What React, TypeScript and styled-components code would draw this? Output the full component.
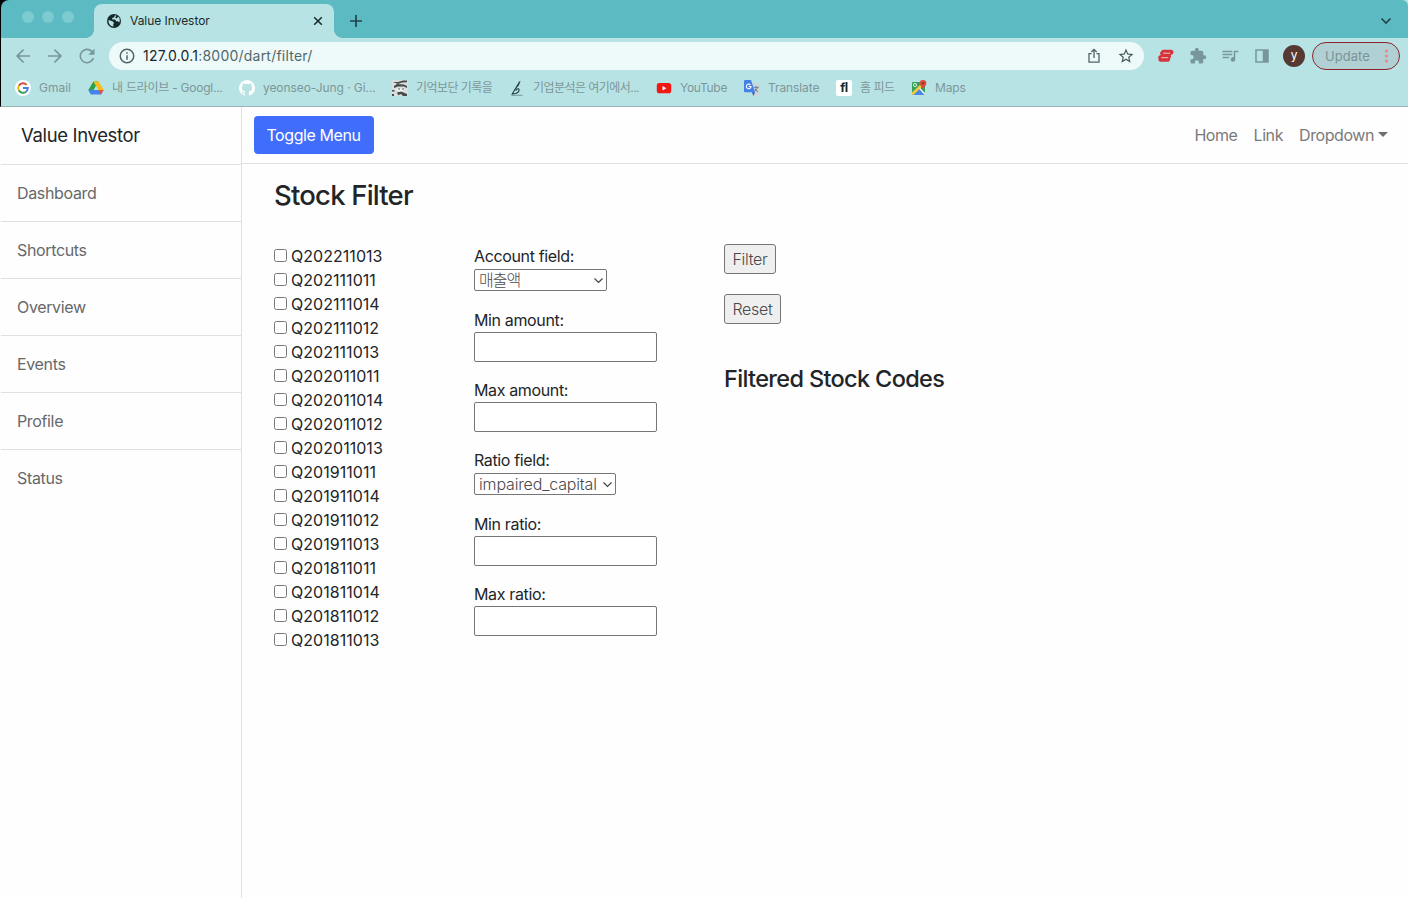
import React from 'react';
import styled, { createGlobalStyle } from 'styled-components';

const GlobalStyle = createGlobalStyle`
  *, *::before, *::after { box-sizing: border-box; }
  body {
    margin: 0;
    background: #fefefe;
    color: #222528;
    font-family: Inter, "Noto Sans CJK KR", sans-serif;
    font-size: 16px;
    line-height: 24px;
    overflow: hidden;
  }
  button, input, select { font: inherit; margin: 0; }
`;

const Window = styled.div`
  height: 898px;
  display: flex;
  flex-direction: column;
  overflow: hidden;
`;

const Chrome = styled.header`
  flex: none;
  height: 107px;
  background: #b8e3e4;
  border-left: 1px solid #000;
  border-bottom: 1px solid #9ab3b9;
`;

const TabStrip = styled.div`
  height: 38px;
  display: flex;
  align-items: flex-end;
  background: #5bbac2;
  border-top-left-radius: 8px;
  border-top-right-radius: 6px;
  box-shadow: -6px -6px 0 #000;
`;

const Lights = styled.div`
  display: flex;
  gap: 8px;
  width: 93px;
  padding: 0 0 15px 21px;
`;

const Light = styled.i`
  width: 12px;
  height: 12px;
  border-radius: 50%;
  background: #7bcbd0;
`;

const Tab = styled.div`
  position: relative;
  width: 240px;
  height: 34px;
  display: flex;
  align-items: center;
  padding: 0 10px 0 13px;
  border-radius: 8px 8px 0 0;
  background: #b8e3e4;
  color: #1a2b2d;
  font-size: 12px;
  letter-spacing: -0.03px;

  &::before, &::after {
    content: '';
    position: absolute;
    bottom: 0;
    width: 8px;
    height: 8px;
  }
  &::before { left: -8px; background: radial-gradient(circle at 0 0, transparent 7.5px, #b8e3e4 8px); }
  &::after { right: -8px; background: radial-gradient(circle at 100% 0, transparent 7.5px, #b8e3e4 8px); }
`;

const TabTitle = styled.span`
  flex: 1;
  margin-left: 9px;
`;

const NewTab = styled.div`
  display: flex;
  padding: 0 0 10px 15px;
  flex: 1;
`;

const TabSearch = styled.div`
  display: flex;
  padding: 0 16px 12px 0;
`;

const Toolbar = styled.div`
  height: 36px;
  display: flex;
  align-items: center;
`;

const NavIcons = styled.div`
  width: 108px;
  padding-left: 12px;
  display: flex;
  gap: 12px;
`;

const AddressBar = styled.div`
  width: 1035px;
  height: 28px;
  display: flex;
  align-items: center;
  padding: 0 9px;
  border-radius: 14px;
  background: #eef9f9;
`;

const Url = styled.span`
  flex: 1;
  margin-left: 7px;
  font-size: 14px;
  letter-spacing: 0.22px;
  color: #52686b;
  b { font-weight: 400; color: #15282b; }
`;

const AddressActions = styled.div`
  display: flex;
  gap: 14px;
`;

const Extensions = styled.div`
  display: flex;
  align-items: center;
  gap: 14px;
  margin-left: 13px;
`;

const Avatar = styled.div`
  width: 22px;
  height: 22px;
  margin-left: 12px;
  border-radius: 50%;
  background: #553932;
  color: #fff;
  font-size: 12px;
  line-height: 20px;
  text-align: center;
`;

const Update = styled.button`
  width: 88px;
  height: 28px;
  margin-left: 7px;
  padding: 0 10px 0 12px;
  display: flex;
  align-items: center;
  justify-content: space-between;
  border: 1px solid #8e2229;
  border-radius: 14px;
  background: #b0d0d3;
  color: #7b9497;
  font-size: 13px;
  letter-spacing: 0.05px;
`;

const Bookmarks = styled.div`
  height: 28px;
  display: flex;
  align-items: center;
  padding-left: 14px;
`;

const Bookmark = styled.div<{ $w: number; $ls?: number }>`
  width: ${p => p.$w}px;
  display: flex;
  align-items: center;
  gap: 8px;
  white-space: nowrap;
  color: #7c9799;
  font-size: 12px;
  line-height: 16px;
  letter-spacing: ${p => p.$ls ?? 0}px;
  svg { flex: none; }
`;

const Page = styled.div`
  flex: 1;
  display: flex;
  padding-left: 1px;
`;

const Sidebar = styled.aside`
  width: 241px;
  border-right: 1px solid #dfe0e1;
`;

const Brand = styled.div`
  height: 58px;
  padding: 14px 20px;
  border-bottom: 1px solid #dfe0e1;
  font-size: 18.5px;
  line-height: 28px;
  letter-spacing: -0.35px;
`;

const SideLink = styled.a`
  display: block;
  height: 57px;
  padding: 16px;
  color: #676869;
  letter-spacing: -0.35px;
  &:not(:last-child) { border-bottom: 1px solid #dfe0e1; }
`;

const Main = styled.main`
  flex: 1;
`;

const Navbar = styled.nav`
  height: 57px;
  display: flex;
  align-items: center;
  justify-content: space-between;
  padding: 0 20px 0 12px;
  border-bottom: 1px solid #dfe0e1;
`;

const ToggleButton = styled.button`
  width: 120px;
  height: 38px;
  padding: 0 1px 0 0;
  border: 0;
  border-radius: 4px;
  background: #416dfc;
  color: #fff;
  letter-spacing: -0.42px;
  white-space: nowrap;
`;

const NavLinks = styled.div`
  display: flex;
  gap: 16px;
  color: #7a7a7a;
  letter-spacing: -0.42px;
`;

const Caret = styled.i`
  display: inline-block;
  margin-left: 4px;
  vertical-align: 4px;
  border: 5px solid transparent;
  border-top-color: #6f6f6f;
  border-bottom: 0;
`;

const Content = styled.div`
  padding: 14px 32px;
`;

const Title = styled.h1`
  margin: 0 0 32px;
  font-size: 27.5px;
  line-height: 34px;
  font-weight: 500;
  letter-spacing: -0.8px;
`;

const Columns = styled.div`
  display: grid;
  grid-template-columns: 200px 250px 1fr;
`;

const Check = styled.label`
  display: flex;
  align-items: center;
  height: 24px;
  letter-spacing: 0.04px;
`;

const Box = styled.input`
  appearance: none;
  width: 13px;
  height: 13px;
  margin: 0 4px 1px 0;
  border: 1px solid #767676;
  border-radius: 2.5px;
  background: #fff;
`;

const Field = styled.div`
  display: flex;
  flex-direction: column;
  align-items: flex-start;
  margin-bottom: 16px;
  letter-spacing: -0.36px;
`;

const TextInput = styled.input`
  width: 183px;
  height: 30px;
  border: 1px solid #767676;
  border-radius: 2px;
  background: #fff;
`;

const SelectWrap = styled.div<{ $w: number }>`
  position: relative;
  width: ${p => p.$w}px;
  height: 22px;
  margin: 1px 0;
  svg { position: absolute; right: 3px; top: 7px; pointer-events: none; }
`;

const Select = styled.select<{ $ls: number }>`
  appearance: none;
  display: block;
  width: 100%;
  height: 22px;
  padding: 0 0 0 4px;
  border: 1px solid #767676;
  border-radius: 2px;
  background: #fff;
  color: #4a4a4a;
  font-weight: 300;
  line-height: 20px;
  letter-spacing: ${p => p.$ls}px;
`;

const ActionButton = styled.button<{ $w: number }>`
  display: block;
  width: ${p => p.$w}px;
  height: 30px;
  margin-bottom: 20px;
  padding: 0;
  border: 1px solid #767676;
  border-radius: 3px;
  background: #efefef;
  color: #4a4a4a;
  font-weight: 300;
  letter-spacing: -0.3px;
`;

const Subtitle = styled.h2`
  margin: 41px 0 0;
  font-size: 23.5px;
  line-height: 28px;
  font-weight: 500;
  letter-spacing: -0.66px;
`;

const S = ({ children, c = '#78979a', w = 18 }: { children: React.ReactNode; c?: string; w?: number }) => (
  <svg width={w} height={w} viewBox="0 0 24 24" fill={c}>{children}</svg>
);

const Fav = ({ children }: { children: React.ReactNode }) => (
  <svg width="16" height="16" viewBox="0 0 16 16">{children}</svg>
);

const GoogleIcon = () => (
  <Fav>
    <circle cx="8" cy="8" r="8" fill="#fff" />
    <g fill="none" strokeWidth="2">
      <path d="M11.6 4.8A4.8 4.8 0 0 0 3.8 5.7" stroke="#d9483d" />
      <path d="M3.8 5.7A4.8 4.8 0 0 0 3.8 10.3" stroke="#f0b90c" />
      <path d="M3.8 10.3A4.8 4.8 0 0 0 11.1 11.7" stroke="#36a256" />
      <path d="M11.1 11.7A4.8 4.8 0 0 0 12.8 8H8" stroke="#4c80e8" />
    </g>
  </Fav>
);

const DriveIcon = () => (
  <Fav>
    <path d="M5.3 1.5h5.3L5.5 10.2 3 14.4.4 9.9z" fill="#2ba24c" />
    <path d="M5.3 1.5h5.3l5 8.5h-5.2z" fill="#f9bd16" />
    <path d="M.4 10h15.2L13 14.5H3z" fill="#4683ee" />
    <path d="M8 6.2 5.8 10h4.4z" fill="#b8e3e4" />
    <path d="M13 14.5 10.3 10h5.3z" fill="#e5533f" />
  </Fav>
);

const GithubIcon = () => (
  <Fav>
    <path fill="#fff" d="M8 0a8 8 0 0 0-2.5 15.6c.4 0 .5-.2.5-.4v-1.5c-2 .4-2.6-.5-2.8-1-.1-.2-.5-.9-.8-1.1-.3-.1-.7-.5 0-.5.6 0 1.1.6 1.2.8.7 1.2 1.9.9 2.4.7.1-.5.3-.9.5-1.1-1.8-.2-3.6-.9-3.6-4 0-.8.3-1.6.8-2.1-.1-.2-.4-1 .1-2.1 0 0 .7-.2 2.2.8a7.4 7.4 0 0 1 4 0c1.5-1 2.2-.8 2.2-.8.4 1.1.2 1.9.1 2.1.5.6.8 1.3.8 2.1 0 3.1-1.9 3.8-3.6 4 .3.2.5.7.5 1.5v2.2c0 .2.1.5.5.4A8 8 0 0 0 8 0z" />
  </Fav>
);

const SketchIcon = () => (
  <Fav>
    <path d="M0 0h16v16H0z" fill="#d8e0df" />
    <path d="M1 2h5l5-1.5h4v1.7l-5 .2-4 1.6zM2 6l3-2 7 .5 3 1.5v2l-3-1.500H6L2 8zM0 10h2l1 1.500H0zM5 12.500l4-1 6 2.500v2h-4l-2-2-3 1.200zM0 14h2v2H0z" fill="#454a4a" />
    <path d="M5 8.500h7v1.700l-4 1.300-4-1.500z" fill="#fafafa" />
    <path d="M6 9h2M10 9h2" stroke="#555" />
  </Fav>
);

const QuillIcon = () => (
  <Fav>
    <path d="M10.8 1.5 5.3 10.5 3.3 14l3.4-.5C9 12.8 11 10.5 9.8 9 9 8.2 7.4 9.3 6.8 10.5" fill="none" stroke="#263c40" strokeWidth="1.1" />
    <path d="M11.8.5 9.8 5.500 6 9.700z" fill="#263c40" />
    <path d="M2.500 15.300h11" stroke="#5a777a" strokeWidth=".7" />
  </Fav>
);

const YoutubeIcon = () => (
  <Fav>
    <rect x=".8" y="3" width="14.4" height="10.3" rx="2.6" fill="#f01810" />
    <path d="M6.5 5.9v4.5l3.9-2.250z" fill="#fff" />
  </Fav>
);

const TranslateIcon = () => (
  <Fav>
    <path d="M6 3.500h8.500a1.200 1.200 0 0 1 1.200 1.200v10.100a1.200 1.200 0 0 1-1.200 1.200H9.500z" fill="#ccd5d9" />
    <path d="M9.700 7.300h5M12.100 6.200v1.100M13.500 7.300c-.4 2-2 3.700-3.300 4.500M10.800 8.600c.7 1.500 2 2.600 3.200 3.300" stroke="#687f89" fill="none" />
    <path d="M1.200 0H7l4 12.200H1.200A1.200 1.200 0 0 1 0 11V1.200A1.200 1.200 0 0 1 1.200 0z" fill="#4582e8" />
    <path d="M8 12.200h3L9.300 16z" fill="#3358b4" />
    <path d="M6.400 4.900A2.300 2.300 0 1 0 7 6.500H4.800" stroke="#fff" strokeWidth="1.1" fill="none" />
  </Fav>
);

const FlTile = styled.span`
  width: 16px;
  height: 16px;
  border-radius: 2px;
  background: #fff;
  color: #1d292b;
  font-size: 12.5px;
  font-weight: 700;
  line-height: 16px;
  text-align: center;
  letter-spacing: -0.5px;
`;

const MapsIcon = () => (
  <Fav>
    <path d="M2 2h12v13H2a1 1 0 0 1-1-1V3a1 1 0 0 1 1-1z" fill="#34a259" />
    <path d="m2 15 6-6.500 6 6.500z" fill="#4a87ec" />
    <path d="M1 12.500 11 3l1.500 2L2.500 15 1 14.500z" fill="#f6c83b" />
    <path d="m8 8.800 1-1 5.500 5.700-1 1.500z" fill="#e9f0f0" />
    <circle cx="4" cy="5" r="1.6" fill="none" stroke="#e2f4e8" />
    <path d="M12 0a3.300 3.300 0 0 0-3.300 3.400c0 2.400 2.600 3.200 3.300 6.100.7-2.900 3.300-3.700 3.300-6.100A3.300 3.300 0 0 0 12 0z" fill="#d84c3c" />
    <circle cx="12" cy="3.3" r="1.1" fill="#8d2c25" />
  </Fav>
);

const Chevron = () => (
  <svg width="11" height="10" viewBox="0 0 11 10" fill="none" stroke="#444" strokeWidth="1.2"><path d="m1.5 2.5 4 4 4-4" /></svg>
);

const quarters = [
  'Q202211013', 'Q202111011', 'Q202111014', 'Q202111012', 'Q202111013', 'Q202011011',
  'Q202011014', 'Q202011012', 'Q202011013', 'Q201911011', 'Q201911014', 'Q201911012',
  'Q201911013', 'Q201811011', 'Q201811014', 'Q201811012', 'Q201811013',
];

const AmountField = ({ label }: { label: string }) => (
  <Field><span>{label}</span><TextInput aria-label={label} /></Field>
);

const ChoiceField = ({ label, value, width, spacing }: { label: string; value: string; width: number; spacing: number }) => (
  <Field>
    <span>{label}</span>
    <SelectWrap $w={width}>
      <Select aria-label={label} $ls={spacing}><option>{value}</option></Select>
      <Chevron />
    </SelectWrap>
  </Field>
);

export default function App() {
  return (
    <Window>
      <GlobalStyle />
      <Chrome>
        <TabStrip>
          <Lights><Light /><Light /><Light /></Lights>
          <Tab>
            <svg width="14" height="14" viewBox="0 0 14 14">
              <circle cx="7" cy="7" r="7" fill="#17282a" />
              <path d="M8 1.300 7.300 3.200 5.200 4v1.500h3l.8 1.700h1.800l1.600 1.200c.8-2.600.2-4.500-1.100-5.800L9.800 4.400 8.500 4V3l1-1.300zM1.500 6l3.900 1.200L7.200 9l-1 1 .3 2.400C3.700 12.300 1.300 10 1.500 6z" fill="#b8e3e4" />
            </svg>
            <TabTitle>Value Investor</TabTitle>
            <svg width="12" height="12" viewBox="0 0 12 12" stroke="#17282a" strokeWidth="1.5"><path d="m2.200 2.200 7.600 7.600m0-7.600L2.200 9.800" /></svg>
          </Tab>
          <NewTab>
            <svg width="14" height="14" viewBox="0 0 14 14" stroke="#244349" strokeWidth="1.7"><path d="M7 1v12M1 7h12" /></svg>
          </NewTab>
          <TabSearch>
            <svg width="12" height="10" viewBox="0 0 12 10" fill="none" stroke="#244349" strokeWidth="1.6"><path d="m1.500 2.500 4.500 4.500 4.500-4.500" /></svg>
          </TabSearch>
        </TabStrip>
        <Toolbar>
          <NavIcons>
            <S w={20}><path d="M20.500 11H7.300l6-6L12 3.500 3.500 12l8.500 8.500 1.400-1.400-6-6.100h13.100z" /></S>
            <S w={20}><path d="M3.500 11h13.200l-6-6L12 3.500l8.500 8.500-8.500 8.500-1.400-1.400 6-6.100H3.500z" /></S>
            <S w={20}><path d="M18.400 5.600A9 9 0 1 0 20.700 14.500h-2.200A7 7 0 1 1 16.900 7.100L13.500 10.500H21V3z" /></S>
          </NavIcons>
          <AddressBar>
            <S w={18} c="#506569"><path d="M11 7h2v2h-2zm0 4h2v6h-2zm1-9a10 10 0 1 0 0 20 10 10 0 0 0 0-20zm0 18a8 8 0 1 1 0-16 8 8 0 0 1 0 16z" /></S>
            <Url><b>127.0.0.1</b>:8000/dart/filter/</Url>
            <AddressActions>
              <svg width="18" height="18" viewBox="0 0 18 18" fill="none" stroke="#506569" strokeWidth="1.3"><path d="M6.500 6.700H4v8.500h10V6.700h-2.500M9 11V2.500M6.300 5 9 2.300 11.700 5" /></svg>
              <S w={18} c="#465b5e"><path d="m22 9.240-7.190-.62L12 2 9.190 8.630 2 9.240l5.460 4.730L5.820 21 12 17.270 18.180 21l-1.630-7.030L22 9.240zM12 15.400l-3.760 2.270 1-4.280-3.320-2.880 4.380-.38L12 6.100l1.710 4.040 4.380.38-3.320 2.880 1 4.280L12 15.400z" /></S>
            </AddressActions>
          </AddressBar>
          <Extensions>
            <svg width="18" height="18" viewBox="0 0 18 18">
              <path d="M6.500 2.700h8a2.400 2.400 0 0 1 1.700 3.500 2.600 2.600 0 0 1-2.500 1.600 2.500 2.500 0 0 1-.5 3.300 3 3 0 0 1-.4 2.300 2.600 2.600 0 0 1-2.200 1.300H3.500a2.200 2.200 0 0 1-1.900-3 2.500 2.500 0 0 1-.2-2.300A2.600 2.600 0 0 1 4 7.900a2.200 2.200 0 0 1 .1-3.400 2.700 2.700 0 0 1 2.400-1.800z" fill="#d5333a" />
              <path d="M6.200 6.200h7M4.300 10.700h6.900" stroke="#efc6c8" strokeWidth="1" />
            </svg>
            <S><path d="M20.500 11H19V7a2 2 0 0 0-2-2h-4V3.500a2.500 2.500 0 0 0-5 0V5H4a2 2 0 0 0-2 2v3.800h1.500a2.700 2.700 0 0 1 0 5.400H2V20a2 2 0 0 0 2 2h3.800v-1.500a2.700 2.700 0 0 1 5.400 0V22H17a2 2 0 0 0 2-2v-4h1.500a2.500 2.500 0 0 0 0-5z" /></S>
            <S><path d="M2 5h13v2H2zm0 4h13v2H2zm0 4h9v2H2zM17 5h6v2h-4v9.500a3 3 0 1 1-2-2.800z" /></S>
            <S><path d="M3 3h18v18H3zm2 2v14h8V5z" fillRule="evenodd" /></S>
          </Extensions>
          <Avatar>y</Avatar>
          <Update>
            Update
            <svg width="5" height="14" viewBox="0 0 5 14" fill="#ed8587"><circle cx="2.5" cy="2" r="1.6" /><circle cx="2.5" cy="7" r="1.6" /><circle cx="2.5" cy="12" r="1.6" /></svg>
          </Update>
        </Toolbar>
        <Bookmarks>
          <Bookmark $w={73}><GoogleIcon />Gmail</Bookmark>
          <Bookmark $w={151} $ls={-0.25}><DriveIcon />내 드라이브 - Googl...</Bookmark>
          <Bookmark $w={153} $ls={-0.07}><GithubIcon />yeonseo-Jung · Gi...</Bookmark>
          <Bookmark $w={117} $ls={-0.55}><SketchIcon />기억보단 기록을</Bookmark>
          <Bookmark $w={147} $ls={-0.55}><QuillIcon />기업분석은 여기에서...</Bookmark>
          <Bookmark $w={88} $ls={-0.3}><YoutubeIcon />YouTube</Bookmark>
          <Bookmark $w={92} $ls={-0.1}><TranslateIcon />Translate</Bookmark>
          <Bookmark $w={75} $ls={-0.5}><FlTile>fl</FlTile>홈 피드</Bookmark>
          <Bookmark $w={75} $ls={-0.15}><MapsIcon />Maps</Bookmark>
        </Bookmarks>
      </Chrome>
      <Page>
        <Sidebar>
          <Brand>Value Investor</Brand>
          {['Dashboard', 'Shortcuts', 'Overview', 'Events', 'Profile', 'Status'].map(t => <SideLink key={t}>{t}</SideLink>)}
        </Sidebar>
        <Main>
          <Navbar>
            <ToggleButton>Toggle Menu</ToggleButton>
            <NavLinks><span>Home</span><span>Link</span><span>Dropdown<Caret /></span></NavLinks>
          </Navbar>
          <Content>
            <Title>Stock Filter</Title>
            <Columns>
              <div>{quarters.map(q => <Check key={q}><Box type="checkbox" />{q}</Check>)}</div>
              <div>
                <ChoiceField label="Account field:" value="매출액" width={133} spacing={-1} />
                <AmountField label="Min amount:" />
                <AmountField label="Max amount:" />
                <ChoiceField label="Ratio field:" value="impaired_capital" width={142} spacing={-0.15} />
                <AmountField label="Min ratio:" />
                <AmountField label="Max ratio:" />
              </div>
              <div>
                <ActionButton $w={52}>Filter</ActionButton>
                <ActionButton $w={57}>Reset</ActionButton>
                <Subtitle>Filtered Stock Codes</Subtitle>
              </div>
            </Columns>
          </Content>
        </Main>
      </Page>
    </Window>
  );
}
